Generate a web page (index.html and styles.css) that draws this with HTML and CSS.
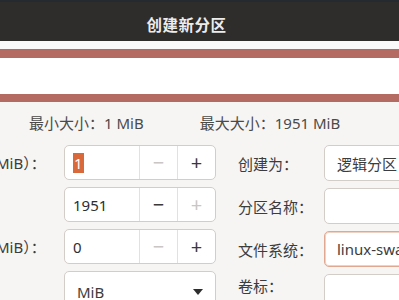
FILE: index.html
```html
<!DOCTYPE html>
<html lang="zh-CN">
<head>
    <meta charset="UTF-8">
    <meta name="viewport" content="width=device-width, initial-scale=1.0">
    <title>创建新分区</title>
    <link rel="stylesheet" href="styles.css">
</head>
<body>
    <header class="titlebar">
        <h1>创建新分区</h1>
    </header>

    <div class="partition-map">
        <div class="partition-block"></div>
    </div>

    <div class="limits">
        <span>最小大小：1 MiB</span>
        <span>最大大小：1951 MiB</span>
    </div>

    <div class="form">
        <div class="grid-left">
            <label class="row-label">之前的空余空间（MiB）：</label>
            <div class="spin">
                <span class="spin-value"><span class="selected">1</span></span>
                <span class="spin-btn disabled">−</span>
                <span class="spin-btn">+</span>
            </div>

            <label class="row-label">新大小（MiB）：</label>
            <div class="spin">
                <span class="spin-value">1951</span>
                <span class="spin-btn">−</span>
                <span class="spin-btn disabled">+</span>
            </div>

            <label class="row-label">之后的空余空间（MiB）：</label>
            <div class="spin">
                <span class="spin-value">0</span>
                <span class="spin-btn disabled">−</span>
                <span class="spin-btn">+</span>
            </div>

            <label class="row-label">对齐到：</label>
            <div class="combo">
                <span>MiB</span>
                <span class="arrow"></span>
            </div>
        </div>

        <div class="grid-right">
            <label class="row-label">创建为：</label>
            <div class="field">逻辑分区</div>

            <label class="row-label">分区名称：</label>
            <div class="field"></div>

            <label class="row-label">文件系统：</label>
            <div class="field focused">linux-swap</div>

            <label class="row-label top">卷标：</label>
            <div class="field"></div>
        </div>
    </div>
</body>
</html>
```

FILE: styles.css
```css
body {
    margin: 0;
    width: 399px;
    height: 300px;
    overflow: hidden;
    background-color: #f6f5f4;
    font-family: "Noto Sans", "Noto Sans CJK SC", sans-serif;
    font-size: 15px;
    color: #3c3c3c;
}
.titlebar {
    background-color: #2f2d2c;
    border-top: 2px solid #252a31;
    height: 41px;
    box-sizing: border-box;
    display: flex;
    justify-content: center;
    align-items: center;
    padding-right: 26px;
    padding-top: 5px;
}
.titlebar h1 {
    margin: 0;
    font-size: 15.5px;
    font-weight: bold;
    color: #ececec;
    letter-spacing: 0.5px;
}
.partition-map {
    background-color: #fafafa;
    padding-top: 8px;
}
.partition-block {
    height: 36px;
    background-color: #fff;
    border-top: 9px solid #b46b62;
    border-bottom: 8px solid #b46b62;
}
.limits {
    display: flex;
    gap: 56px;
    padding-left: 29px;
    margin-top: 11px;
    height: 20px;
    line-height: 20px;
    color: #4a4a4a;
}
.form {
    display: flex;
    margin-top: 12px;
}
.grid-left {
    display: grid;
    grid-template-columns: 166px 152px;
    grid-auto-rows: 35px;
    column-gap: 22px;
    row-gap: 7px;
    margin-left: -124px;
    flex-shrink: 0;
}
.grid-right {
    display: grid;
    grid-template-columns: 64px 110px;
    grid-auto-rows: 36px;
    column-gap: 22px;
    row-gap: 7px;
    margin-left: 22px;
    flex-shrink: 0;
}
.row-label {
    display: flex;
    align-items: center;
    white-space: nowrap;
}
.row-label.top {
    align-items: flex-start;
    padding-top: 1px;
}
.spin {
    display: flex;
    background-color: #fff;
    border: 1px solid #d3cdc8;
    border-radius: 5px;
}
.spin-value {
    flex: 1;
    display: flex;
    align-items: center;
    padding-left: 8px;
    color: #2e2e2e;
}
.selected {
    background-color: #d9693b;
    color: #fff;
    line-height: 20px;
    padding: 0 1px;
}
.spin-btn {
    width: 37px;
    border-left: 1px solid #e4e0dc;
    display: flex;
    justify-content: center;
    align-items: center;
    font-size: 20px;
    color: #3a3a3a;
}
.spin-btn.disabled {
    color: #c9c6c3;
}
.combo {
    display: flex;
    justify-content: space-between;
    align-items: center;
    padding: 0 12px;
    background-color: #fff;
    border: 1px solid #d3cdc8;
    border-radius: 5px;
    height: 40px;
}
.arrow {
    width: 0;
    height: 0;
    border-left: 5px solid transparent;
    border-right: 5px solid transparent;
    border-top: 6px solid #2e2e2e;
}
.field {
    display: flex;
    align-items: center;
    padding-left: 12px;
    background-color: #fff;
    border: 1px solid #d3cdc8;
    border-radius: 5px;
    white-space: nowrap;
    overflow: hidden;
}
.field.focused {
    border-color: #e0a890;
    box-shadow: inset 0 0 0 1px #f0d2c4;
}
```
